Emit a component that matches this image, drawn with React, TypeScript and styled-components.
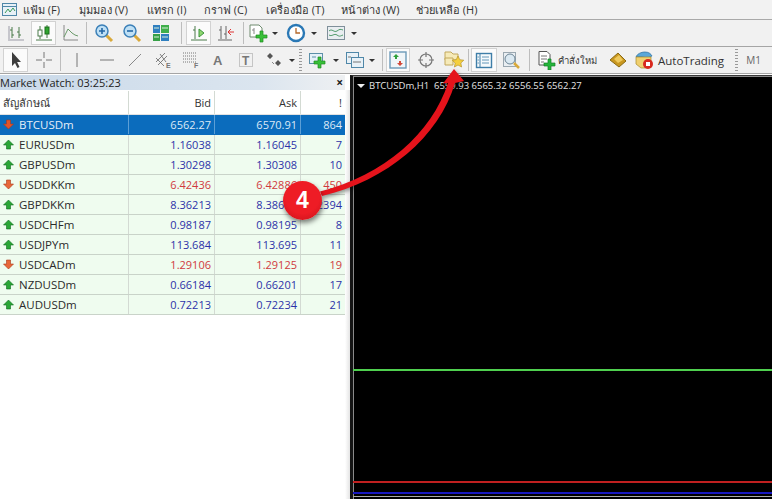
import styled, { createGlobalStyle } from "styled-components";
import type { ReactNode } from "react";

const Global = createGlobalStyle`
  html, body { margin: 0; padding: 0; background: #fff; }
  body { width: 772px; height: 499px; overflow: hidden; font-family: "Open Sans", "Noto Sans", "DejaVu Sans", sans-serif; }
`;

const Page = styled.div`
  position: relative;
  width: 772px;
  height: 499px;
  overflow: hidden;
  display: flex;
  flex-direction: column;
`;

const MenuBar = styled.div`
  height: 19px;
  display: flex;
  align-items: center;
  background: #f2f2f2;
  border-bottom: 1px solid #a9a9a9;
  box-sizing: content-box;
`;

const MenuLogo = styled.div`
  width: 23px;
  height: 19px;
  display: flex;
  align-items: center;
  padding-left: 1px;
  box-sizing: border-box;
`;

const MenuItem = styled.span<{ $w: number }>`
  width: ${(p) => p.$w}px;
  font-size: 11px;
  color: #333;
  white-space: nowrap;
`;

const Toolbar = styled.div<{ $h: number }>`
  height: ${(p) => p.$h}px;
  display: flex;
  align-items: center;
  background: #f1f1f1;
  border-bottom: 1px solid #a5a5a5;
  overflow: hidden;
`;

const Tool = styled.div<{ $w: number; $on?: boolean }>`
  width: ${(p) => p.$w}px;
  height: 24px;
  flex: none;
  display: flex;
  align-items: center;
  justify-content: center;
  box-sizing: border-box;
  background: ${(p) => (p.$on ? "#fbfbfb" : "transparent")};
  border: 1px solid ${(p) => (p.$on ? "#d2d2d2" : "transparent")};
`;

const Caret = styled.i<{ $w?: number }>`
  display: block;
  flex: none;
  width: 0;
  height: 0;
  margin: 0 ${(p) => p.$w ?? 4}px 0 2px;
  border-left: 3px solid transparent;
  border-right: 3px solid transparent;
  border-top: 3px solid #333;
`;

const Sep = styled.i<{ $w: number }>`
  display: block;
  flex: none;
  width: ${(p) => p.$w}px;
  height: 22px;
  background: linear-gradient(#bdbdbd, #bdbdbd) center / 1px 100% no-repeat;
`;

const Grip = styled.i<{ $w: number }>`
  display: block;
  flex: none;
  width: ${(p) => p.$w}px;
  height: 22px;
  background: repeating-linear-gradient(#9a9a9a 0 1px, transparent 1px 3px) center / 3px 100% no-repeat;
`;

const ToolText = styled.span<{ $w: number; $size: number; $muted?: boolean }>`
  width: ${(p) => p.$w}px;
  flex: none;
  font-size: ${(p) => p.$size}px;
  color: ${(p) => (p.$muted ? "#666" : "#333")};
  white-space: nowrap;
`;

const Workspace = styled.div`
  flex: 1;
  display: flex;
  min-height: 0;
  background: #fff;
  padding-top: 1px;
`;

const Panel = styled.div`
  width: 345px;
  flex: none;
`;

const PanelTitle = styled.div`
  height: 15px;
  display: flex;
  align-items: center;
  justify-content: space-between;
  padding-right: 2px;
  background: linear-gradient(90deg, #c9d9e9, #dbe5ef 75%, #eef0f2);
  font-size: 11px;
  color: #222;
  white-space: nowrap;
`;

const CloseX = styled.span`
  font-size: 12px;
  font-weight: 700;
  color: #222;
  line-height: 1;
`;

const Table = styled.div`
  margin-top: 1px;
  display: flex;
  flex-direction: column;
`;

const Row = styled.div<{ $head?: boolean; $sel?: boolean; $down?: boolean }>`
  display: grid;
  grid-template-columns: 129px 86px 86px 44px;
  height: ${(p) => (p.$head ? 24 : 20)}px;
  box-sizing: border-box;
  background: ${(p) => (p.$head ? "#fff" : p.$sel ? "#0b6cbd" : "#effcef")};
  color: ${(p) => (p.$head ? "#333" : p.$sel ? "#dce9f6" : p.$down ? "#cf3a3e" : "#2c32a8")};
  border-bottom: 1px solid ${(p) => (p.$head ? "#e2e2e2" : p.$sel ? "#0b6cbd" : "#c9d3c9")};
  font-size: 11px;
`;

const Cell = styled.div<{ $first?: boolean; $sel?: boolean }>`
  display: flex;
  align-items: center;
  justify-content: ${(p) => (p.$first ? "flex-start" : "flex-end")};
  padding: ${(p) => (p.$first ? "0 0 0 3px" : "0 3px 0 0")};
  gap: 5px;
  overflow: hidden;
  white-space: nowrap;
  border-right: 1px solid ${(p) => (p.$sel ? "#5c9fd6" : "#d3dad3")};
  &:last-child { border-right: none; }
`;

const Symbol = styled.span<{ $sel?: boolean }>`
  font-size: 11.5px;
  color: ${(p) => (p.$sel ? "#e6eff8" : "#2b2b2b")};
`;

const Splitter = styled.div`
  width: 5px;
  flex: none;
  margin-top: 15px;
  background: linear-gradient(90deg, #fff, #e4e4e4);
`;

const Chart = styled.div`
  position: relative;
  flex: 1;
  background: #000;
  border-left: 3px solid #141414;
  border-top: 1px solid #3a3a3a;
  box-shadow: inset 1px 1px #8a8a8a;
  padding: 3px 0 0 4px;
  color: #e4e4e4;
  font-size: 9.5px;
  display: flex;
  align-items: flex-start;
  gap: 4px;
  height: 424px;
  box-sizing: border-box;
  white-space: nowrap;
`;

const ChartCaret = styled.i`
  display: block;
  margin-top: 5px;
  width: 0;
  height: 0;
  border-left: 4px solid transparent;
  border-right: 4px solid transparent;
  border-top: 4px solid #eee;
`;

const PriceLines = styled.svg`
  position: absolute;
  left: 0;
  top: 0;
`;

const ArrowOverlay = styled.svg`
  position: absolute;
  left: 0;
  top: 0;
  pointer-events: none;
  filter: drop-shadow(1px 2px 2px rgba(0, 0, 0, 0.45));
`;

const Badge = styled.div`
  position: absolute;
  left: 283px;
  top: 181px;
  width: 39px;
  height: 39px;
  border-radius: 50%;
  display: flex;
  align-items: center;
  justify-content: center;
  background: radial-gradient(circle at 50% 40%, #ee1c25 55%, #c31019 100%);
  box-shadow: 1px 3px 5px rgba(0, 0, 0, 0.5);
  color: #fff;
  font: 700 23px "Liberation Sans", Arial, sans-serif;
`;

const Svg = ({ children, w = 20 }: { children: ReactNode; w?: number }) => (
  <svg width={w} height={20} viewBox={`0 0 ${w} 20`} fill="none">
    {children}
  </svg>
);

const g = "#4b7a4b";

const icons: Record<string, ReactNode> = {
  bars: (
    <Svg>
      <path d="M6 4v11M4 7h2M6 12h2M13 4v11M11 9h2M13 12h2" stroke={g} />
      <path d="M2 17h16M3 16V3" stroke="#778" strokeWidth=".7" />
    </Svg>
  ),
  candles: (
    <Svg>
      <path d="M6 3v13M13 2v13M2 17h16" stroke={g} />
      <rect x="4" y="7" width="4" height="6" fill="#fff" stroke={g} />
      <rect x="11" y="4" width="4" height="7" fill="#2fa52f" stroke="#1d6e1d" />
    </Svg>
  ),
  line: (
    <Svg>
      <path d="M4 2v15h14" stroke="#888" />
      <path d="M4 14 8 6l4 4 3 2 3 1" stroke="#6a9a6a" />
    </Svg>
  ),
  zoomIn: (
    <Svg>
      <path d="m12 12 6 6" stroke="#d9a93a" strokeWidth="3" />
      <circle cx="8" cy="8" r="6" fill="#bfe0f5" stroke="#3c80b8" strokeWidth="1.5" />
      <path d="M5 8h6M8 5v6" stroke="#2467a5" strokeWidth="1.6" />
    </Svg>
  ),
  zoomOut: (
    <Svg>
      <path d="m12 12 6 6" stroke="#d9a93a" strokeWidth="3" />
      <circle cx="8" cy="8" r="6" fill="#bfe0f5" stroke="#3c80b8" strokeWidth="1.5" />
      <path d="M5 8h6" stroke="#2467a5" strokeWidth="1.6" />
    </Svg>
  ),
  tile: (
    <Svg>
      <rect x="2" y="2" width="7" height="8" fill="#2f7fbf" />
      <rect x="10" y="2" width="8" height="8" fill="#3fae4a" />
      <rect x="2" y="11" width="7" height="7" fill="#36a047" />
      <rect x="10" y="11" width="8" height="7" fill="#2f7fbf" />
      <path d="M3 5h5M11 5h6M3 14h5M11 14h6" stroke="#d8efd8" />
    </Svg>
  ),
  shift: (
    <Svg>
      <path d="M6 3v13M4 7h2M2 17h16" stroke={g} />
      <path d="m10 6 5 4-5 4z" fill="#8fd66f" stroke="#3d963d" />
    </Svg>
  ),
  autoScroll: (
    <Svg>
      <path d="M5 3v13M3 7h2M10 3v13M8 11h2M2 17h14" stroke="#666" />
      <path d="M18 9h-5M15 6l-3 3 3 3" stroke="#d33" />
    </Svg>
  ),
  newChart: (
    <Svg>
      <path d="M2 2h9l3 3v9H2z" fill="#fff" stroke="#6e8b6e" />
      <path d="M6 5v6M4 7h2" stroke="#888" />
      <path d="M12 8h3v4h4v3h-4v4h-3v-4H8v-3h4z" fill="#38c038" stroke="#1f8a1f" strokeWidth=".7" />
    </Svg>
  ),
  clock: (
    <Svg>
      <circle cx="10" cy="10" r="8" fill="#fff" stroke="#2a78b5" strokeWidth="2.4" />
      <path d="M10 5v5h4" stroke="#b4682a" strokeWidth="1.3" />
    </Svg>
  ),
  indicators: (
    <Svg>
      <rect x="1.5" y="3.5" width="17" height="13" fill="#e9eef1" stroke="#7f8f9a" />
      <path d="M3 8c3-3 5 2 8 0s3-2 6-1M3 12c3 2 5-2 8 0s3 1 6 0" stroke="#4f9a6a" />
    </Svg>
  ),
  cursor: (
    <Svg>
      <path d="M6 2v14l3-3 2.500 5 2-1-2.400-4.900H15z" fill="#3d3d3d" />
    </Svg>
  ),
  cross: (
    <Svg>
      <path d="M10 2v6M10 12v6M2 10h6M12 10h6" stroke="#777" />
    </Svg>
  ),
  vline: (
    <Svg>
      <path d="M10 3v14" stroke="#777" />
    </Svg>
  ),
  hline: (
    <Svg>
      <path d="M3 10h14" stroke="#777" />
    </Svg>
  ),
  trend: (
    <Svg>
      <path d="m4 16 12-12" stroke="#888" />
    </Svg>
  ),
  channel: (
    <Svg>
      <path d="m3 12 9-9M5 15l9-9M3 8l8 8M7 4l6 8" stroke="#666" strokeWidth=".8" />
      <text x="13" y="18" fontSize="7" fontWeight="700" fill="#777" fontFamily="Liberation Sans">E</text>
    </Svg>
  ),
  fibo: (
    <Svg>
      <path d="M2 3h14M2 6h14M2 9h14M2 12h14" stroke="#777" strokeDasharray="1 1" />
      <text x="13" y="18" fontSize="7" fontWeight="700" fill="#777" fontFamily="Liberation Sans">F</text>
    </Svg>
  ),
  letter: (
    <Svg>
      <text x="5" y="15" fontSize="13" fontWeight="700" fill="#777" fontFamily="Liberation Sans">A</text>
    </Svg>
  ),
  textBox: (
    <Svg>
      <rect x="3.500" y="3.500" width="13" height="13" stroke="#999" strokeDasharray="1 1" />
      <text x="6" y="15" fontSize="12" fontWeight="700" fill="#777" fontFamily="Liberation Sans">T</text>
    </Svg>
  ),
  arrows: (
    <Svg>
      <path d="m3 6 3-3 3 3-3 3zM11 13l3-3 3 3-3 3z" fill="#555" />
      <path d="m8 12 2 2" stroke="#888" />
    </Svg>
  ),
  addWindow: (
    <Svg>
      <rect x="1.500" y="3.500" width="13" height="10" fill="#e5f1f8" stroke="#5c8fa8" />
      <path d="M4 7h4" stroke="#5c8fa8" />
      <path d="M10 7h3v4h4v3h-4v4h-3v-4H6v-3h4z" fill="#38c038" stroke="#1f8a1f" strokeWidth=".7" />
    </Svg>
  ),
  windows: (
    <Svg>
      <rect x="1.500" y="2.500" width="12" height="11" fill="#e8f1f7" stroke="#4f87a8" />
      <rect x="6.500" y="7.500" width="12" height="10" fill="#e8f1f7" stroke="#4f87a8" />
      <path d="M8 12h8M3 7h3" stroke="#777" />
    </Svg>
  ),
  market: (
    <Svg>
      <rect x="2" y="2" width="16" height="16" fill="#f0f5f8" stroke="#6c9ab8" strokeWidth="1.400" />
      <path d="m5 7 3-3 3 3H9v2H7V7z" fill="#2da03a" />
      <path d="m15 13-3 3-3-3h2v-2h2v2z" fill="#d24a3a" />
    </Svg>
  ),
  crosshair: (
    <Svg>
      <circle cx="10" cy="10" r="6" stroke="#777" strokeWidth="1.200" />
      <path d="M10 2v5M10 13v5M2 10h5M13 10h5" stroke="#777" strokeWidth="1.200" />
    </Svg>
  ),
  favorites: (
    <Svg w={22}>
      <path d="M2 2h6l2 2h5v6H2z" fill="#f6eab8" stroke="#c2a85c" />
      <path d="M2 8h8v7H2z" fill="#f6eab8" stroke="#c2a85c" />
      <path d="m15 6 1.800 3.700 4 .5-3 2.800.8 4-3.600-2-3.600 2 .8-4-3-2.800 4-.5z" fill="#f4cf3e" stroke="#b7952b" strokeWidth=".7" />
    </Svg>
  ),
  navigator: (
    <Svg>
      <rect x="2.500" y="3.500" width="15" height="14" fill="#f6fafc" stroke="#3f7ea8" strokeWidth="1.400" />
      <path d="M6 4v13" stroke="#3f7ea8" />
      <path d="M3.500 7H5M3.500 10H5M3.500 13H5M8 7h7M8 10h7M8 13h7" stroke="#3f7ea8" strokeWidth=".8" />
    </Svg>
  ),
  tester: (
    <Svg>
      <rect x="2.500" y="2.500" width="12" height="14" fill="#e9eef2" stroke="#9aa7b0" />
      <circle cx="9" cy="9" r="5" fill="#dbe9f2" stroke="#6c8494" />
      <path d="m13 13 5 5" stroke="#d9a93a" strokeWidth="2.500" />
    </Svg>
  ),
  order: (
    <Svg>
      <path d="M3 1.500h8l3 3V15H3z" fill="#fff" stroke="#555" />
      <path d="M5 6h6M5 9h6M5 12h3" stroke="#777" />
      <path d="M12 9h3v4h4v3h-4v4h-3v-4H8v-3h4z" fill="#24b53a" stroke="#15802a" strokeWidth=".7" />
    </Svg>
  ),
  gold: (
    <Svg>
      <path d="m2 10 8-7 8 8-7 6z" fill="#c9971f" stroke="#8a6a14" />
      <path d="m6 9 5-4 4 5-5 3z" fill="#eec95c" />
    </Svg>
  ),
  auto: (
    <Svg>
      <path d="M2 7c1-3 5-5 9-5s6 2 7 4l-4 2-6-1z" fill="#5aa7d8" stroke="#2d6f9f" strokeWidth=".7" />
      <path d="M2 7h15v7l-3 4H7l-5-4z" fill="#f0d070" stroke="#a88a2a" strokeWidth=".7" />
      <circle cx="14" cy="14" r="5" fill="#d8281e" />
      <rect x="12" y="12" width="4" height="4" fill="#fff" />
    </Svg>
  ),
};

const Icon = ({ name, w, on }: { name: string; w: number; on?: boolean }) => (
  <Tool $w={w} $on={on}>
    {icons[name]}
  </Tool>
);

const Logo = () => (
  <svg width="18" height="16" viewBox="0 0 18 16" fill="none">
    <rect x="1.500" y="1.500" width="14" height="12" fill="#e8f1f7" stroke="#4f87a8" />
    <path d="M1.500 4.500h14" stroke="#4f87a8" />
    <path d="m4 11 3-4 2 3 3-4 2 3" stroke="#3a9a5a" />
  </svg>
);

const Trend = ({ up, sel }: { up: boolean; sel?: boolean }) => (
  <svg width="11" height="11" viewBox="0 0 11 11">
    {up ? (
      <path d="M5.500 1 10.500 6H7.500v4h-4V6H.5z" fill="#2aa636" stroke="#0f6d20" strokeWidth=".6" />
    ) : (
      <path d="M5.500 10 .5 5h3V1h4v4h3z" fill={sel ? "#e2542c" : "#e8683a"} stroke="#a83a1c" strokeWidth=".6" />
    )}
  </svg>
);

const rows = [
  { s: "BTCUSDm", b: "6562.27", a: "6570.91", n: "864", down: true, sel: true },
  { s: "EURUSDm", b: "1.16038", a: "1.16045", n: "7" },
  { s: "GBPUSDm", b: "1.30298", a: "1.30308", n: "10" },
  { s: "USDDKKm", b: "6.42436", a: "6.42886", n: "450", down: true },
  { s: "GBPDKKm", b: "8.36213", a: "8.38607", n: "2394" },
  { s: "USDCHFm", b: "0.98187", a: "0.98195", n: "8" },
  { s: "USDJPYm", b: "113.684", a: "113.695", n: "11" },
  { s: "USDCADm", b: "1.29106", a: "1.29125", n: "19", down: true },
  { s: "NZDUSDm", b: "0.66184", a: "0.66201", n: "17" },
  { s: "AUDUSDm", b: "0.72213", a: "0.72234", n: "21" },
];

const menu: [string, number][] = [
  ["แฟ้ม (F)", 56],
  ["มุมมอง (V)", 68],
  ["แทรก (I)", 57],
  ["กราฟ (C)", 62],
  ["เครื่องมือ (T)", 75],
  ["หน้าต่าง (W)", 75],
  ["ช่วยเหลือ (H)", 70],
];

export default function App() {
  return (
    <Page>
      <Global />
      <MenuBar>
        <MenuLogo>
          <Logo />
        </MenuLogo>
        {menu.map(([t, w]) => (
          <MenuItem key={t} $w={w}>
            {t}
          </MenuItem>
        ))}
      </MenuBar>

      <Toolbar $h={26}>
        <Icon name="bars" w={31} />
        <Icon name="candles" w={25} on />
        <Icon name="line" w={27} />
        <Sep $w={7} />
        <Icon name="zoomIn" w={28} />
        <Icon name="zoomOut" w={28} />
        <Icon name="tile" w={30} />
        <Sep $w={10} />
        <Icon name="shift" w={25} on />
        <Icon name="autoScroll" w={30} />
        <Sep $w={5} />
        <Icon name="newChart" w={24} />
        <Caret $w={5} />
        <Icon name="clock" w={26} />
        <Caret $w={6} />
        <Icon name="indicators" w={26} />
        <Caret />
      </Toolbar>

      <Toolbar $h={26}>
        <Tool $w={3} />
        <Icon name="cursor" w={25} on />
        <Icon name="cross" w={31} />
        <Sep $w={2} />
        <Icon name="vline" w={31} />
        <Icon name="hline" w={29} />
        <Icon name="trend" w={28} />
        <Icon name="channel" w={28} />
        <Icon name="fibo" w={27} />
        <Icon name="letter" w={28} />
        <Icon name="textBox" w={28} />
        <Icon name="arrows" w={27} />
        <Caret $w={1} />
        <Grip $w={9} />
        <Icon name="addWindow" w={26} />
        <Caret $w={4} />
        <Icon name="windows" w={24} />
        <Caret $w={3} />
        <Sep $w={8} />
        <Icon name="market" w={24} on />
        <Icon name="crosshair" w={32} />
        <Icon name="favorites" w={24} />
        <Sep $w={5} />
        <Icon name="navigator" w={26} on />
        <Icon name="tester" w={28} />
        <Sep $w={9} />
        <Icon name="order" w={24} />
        <ToolText $w={48} $size={9.5}>
          คำสั่งใหม่
        </ToolText>
        <Icon name="gold" w={24} />
        <Icon name="auto" w={28} />
        <ToolText $w={74} $size={11.5}>
          AutoTrading
        </ToolText>
        <Grip $w={9} />
        <ToolText $w={24} $size={10} $muted>
          &nbsp;&nbsp;M1
        </ToolText>
      </Toolbar>

      <Workspace>
        <Panel>
          <PanelTitle>
            Market Watch: 03:25:23
            <CloseX>×</CloseX>
          </PanelTitle>
          <Table>
            <Row $head>
              <Cell $first>สัญลักษณ์</Cell>
              <Cell>Bid</Cell>
              <Cell>Ask</Cell>
              <Cell>!</Cell>
            </Row>
            {rows.map((r) => (
              <Row key={r.s} $sel={r.sel} $down={r.down}>
                <Cell $first $sel={r.sel}>
                  <Trend up={!r.down} sel={r.sel} />
                  <Symbol $sel={r.sel}>{r.s}</Symbol>
                </Cell>
                <Cell $sel={r.sel}>{r.b}</Cell>
                <Cell $sel={r.sel}>{r.a}</Cell>
                <Cell $sel={r.sel}>{r.n}</Cell>
              </Row>
            ))}
          </Table>
        </Panel>
        <Splitter />
        <Chart>
          <PriceLines width="419" height="423">
            <rect x="0" y="293" width="419" height="2" fill="#4fd04f" />
            <rect x="0" y="405" width="419" height="2" fill="#c02020" />
            <rect x="0" y="416" width="419" height="2" fill="#1818c0" />
            <rect x="0" y="420" width="419" height="1" fill="#a9a9a9" />
          </PriceLines>
          <ChartCaret />
          <span>BTCUSDm,H1&nbsp; 6559.93 6565.32 6556.55 6562.27</span>
        </Chart>
      </Workspace>

      <ArrowOverlay width="772" height="499">
        <path
          d="M320 191.500C384 175.500 432 133 448 83L443 83.500 454 69 464 81 455 83C439 137 387 180.500 322 196Z"
          fill="#e5131b"
        />
      </ArrowOverlay>
      <Badge>4</Badge>
    </Page>
  );
}
